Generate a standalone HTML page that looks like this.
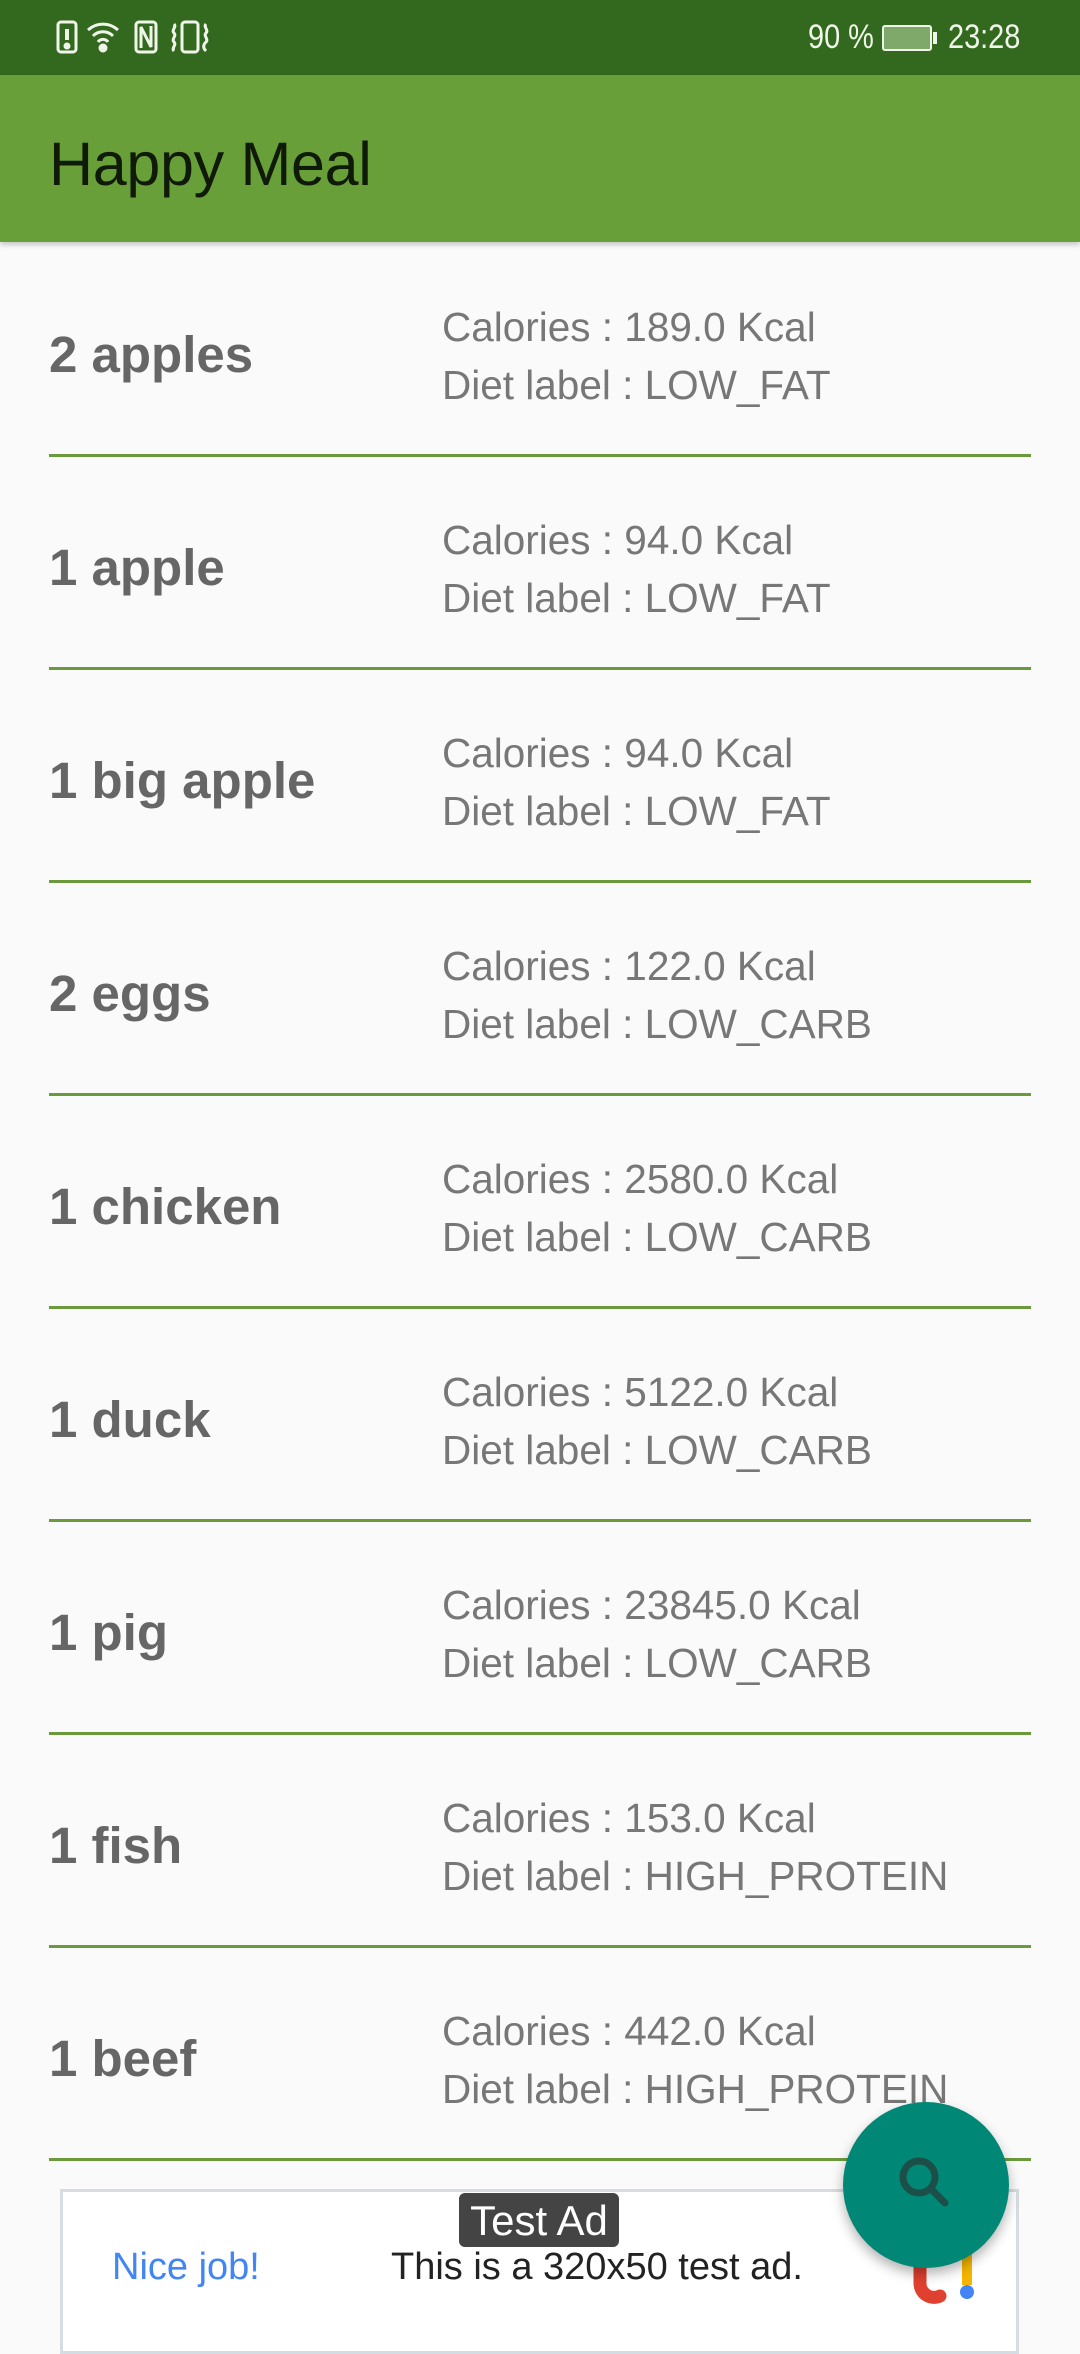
<!DOCTYPE html>
<html><head><meta charset="utf-8"><style>
*{margin:0;padding:0;box-sizing:border-box}
body{width:1080px;height:2340px;overflow:hidden;background:#fafafa;font-family:"Liberation Sans",sans-serif;position:relative}
.sb{position:absolute;left:0;top:0;width:1080px;height:75px;background:#33691e;color:#f0f5ea}
.tb{position:absolute;left:0;top:75px;width:1080px;height:167px;background:#689f38;box-shadow:0 3px 5px rgba(0,0,0,.2)}
.tb h1{position:absolute;left:49px;top:54px;font-size:61px;font-weight:normal;color:#0f1a08;letter-spacing:-0.3px}
.row{position:absolute;left:0;width:1080px;height:213px}
.row .n{position:absolute;left:49px;top:5px;height:211px;line-height:211px;font-size:51px;font-weight:bold;color:#666}
.row .c{position:absolute;left:442px;font-size:40.5px;color:#777;line-height:58px;top:54px}
.row .sep{position:absolute;left:49px;width:982px;height:3px;background:#6a9a3c;top:210px}
</style></head><body>
<div class="sb">
<svg width="240" height="75" style="position:absolute;left:50px;top:0" fill="none" stroke="#f0f5ea" stroke-width="3">
<rect x="8" y="22" width="18" height="30" rx="3"/><line x1="17" y1="29" x2="17" y2="40" stroke-width="4"/><circle cx="17" cy="46" r="2" fill="#f0f5ea"/>
<path d="M38 30a22 22 0 0 1 30 0M43 36a14 14 0 0 1 20 0M48 42a6 6 0 0 1 10 0"/><circle cx="53" cy="48" r="3" fill="#f0f5ea"/>
<rect x="86" y="22" width="20" height="30" rx="3"/><path d="M91 48V27l10 20V26"/>
<rect x="132" y="22" width="16" height="30" rx="3"/><path d="M124 24c3 3-3 6 0 9s-3 6 0 9 -3 6 0 9M156 24c-3 3 3 6 0 9s3 6 0 9-3 6 0 9"/>
</svg>
<div style="position:absolute;left:808px;top:18px;font-size:34px;transform:scaleX(.85);transform-origin:left">90 %</div>
<div style="position:absolute;left:882px;top:25px;width:50px;height:26px;border:2px solid #f0f5ea;border-radius:3px;background:#7ea96a"></div>
<div style="position:absolute;left:933px;top:32px;width:4px;height:12px;background:#f0f5ea"></div>
<div style="position:absolute;left:948px;top:18px;font-size:34px;transform:scaleX(.85);transform-origin:left">23:28</div>
</div>
<div class="tb"><h1>Happy Meal</h1></div>

<div class="row" style="top:244px"><div class="n">2 apples</div><div class="c">Calories : 189.0 Kcal<br>Diet label : LOW_FAT</div><div class="sep"></div></div>
<div class="row" style="top:457px"><div class="n">1 apple</div><div class="c">Calories : 94.0 Kcal<br>Diet label : LOW_FAT</div><div class="sep"></div></div>
<div class="row" style="top:670px"><div class="n">1 big apple</div><div class="c">Calories : 94.0 Kcal<br>Diet label : LOW_FAT</div><div class="sep"></div></div>
<div class="row" style="top:883px"><div class="n">2 eggs</div><div class="c">Calories : 122.0 Kcal<br>Diet label : LOW_CARB</div><div class="sep"></div></div>
<div class="row" style="top:1096px"><div class="n">1 chicken</div><div class="c">Calories : 2580.0 Kcal<br>Diet label : LOW_CARB</div><div class="sep"></div></div>
<div class="row" style="top:1309px"><div class="n">1 duck</div><div class="c">Calories : 5122.0 Kcal<br>Diet label : LOW_CARB</div><div class="sep"></div></div>
<div class="row" style="top:1522px"><div class="n">1 pig</div><div class="c">Calories : 23845.0 Kcal<br>Diet label : LOW_CARB</div><div class="sep"></div></div>
<div class="row" style="top:1735px"><div class="n">1 fish</div><div class="c">Calories : 153.0 Kcal<br>Diet label : HIGH_PROTEIN</div><div class="sep"></div></div>
<div class="row" style="top:1948px"><div class="n">1 beef</div><div class="c">Calories : 442.0 Kcal<br>Diet label : HIGH_PROTEIN</div><div class="sep"></div></div>

<div style="position:absolute;left:60px;top:2189px;width:959px;height:165px;background:#fff;border:3px solid #d6dde2"></div>
<div style="position:absolute;left:459px;top:2193px;width:160px;height:54px;background:#444;border-radius:6px;color:#fff;font-size:42px;text-align:center;line-height:56px">Test Ad</div>
<div style="position:absolute;left:112px;top:2246px;font-size:38px;color:#4285f4">Nice job!</div>
<div style="position:absolute;left:391px;top:2246px;font-size:38px;color:#222">This is a 320x50 test ad.</div>
<svg width="70" height="80" style="position:absolute;left:905px;top:2230px"><path d="M15 35v18a14 14 0 0 0 20 13" stroke="#e04030" stroke-width="13" fill="none" stroke-linecap="round"/><line x1="62" y1="10" x2="62" y2="55" stroke="#f4b400" stroke-width="10"/><circle cx="62" cy="62" r="7" fill="#4285f4"/></svg>
<div style="position:absolute;left:843px;top:2102px;width:166px;height:166px;border-radius:50%;background:#018776;box-shadow:0 6px 12px rgba(0,0,0,.3)"></div>
<svg width="80" height="80" style="position:absolute;left:883px;top:2141px" fill="none" stroke="#1c4f47" stroke-width="7"><circle cx="36" cy="36" r="16"/><line x1="48" y1="48" x2="62" y2="62" stroke-linecap="round"/></svg>
</body></html>
